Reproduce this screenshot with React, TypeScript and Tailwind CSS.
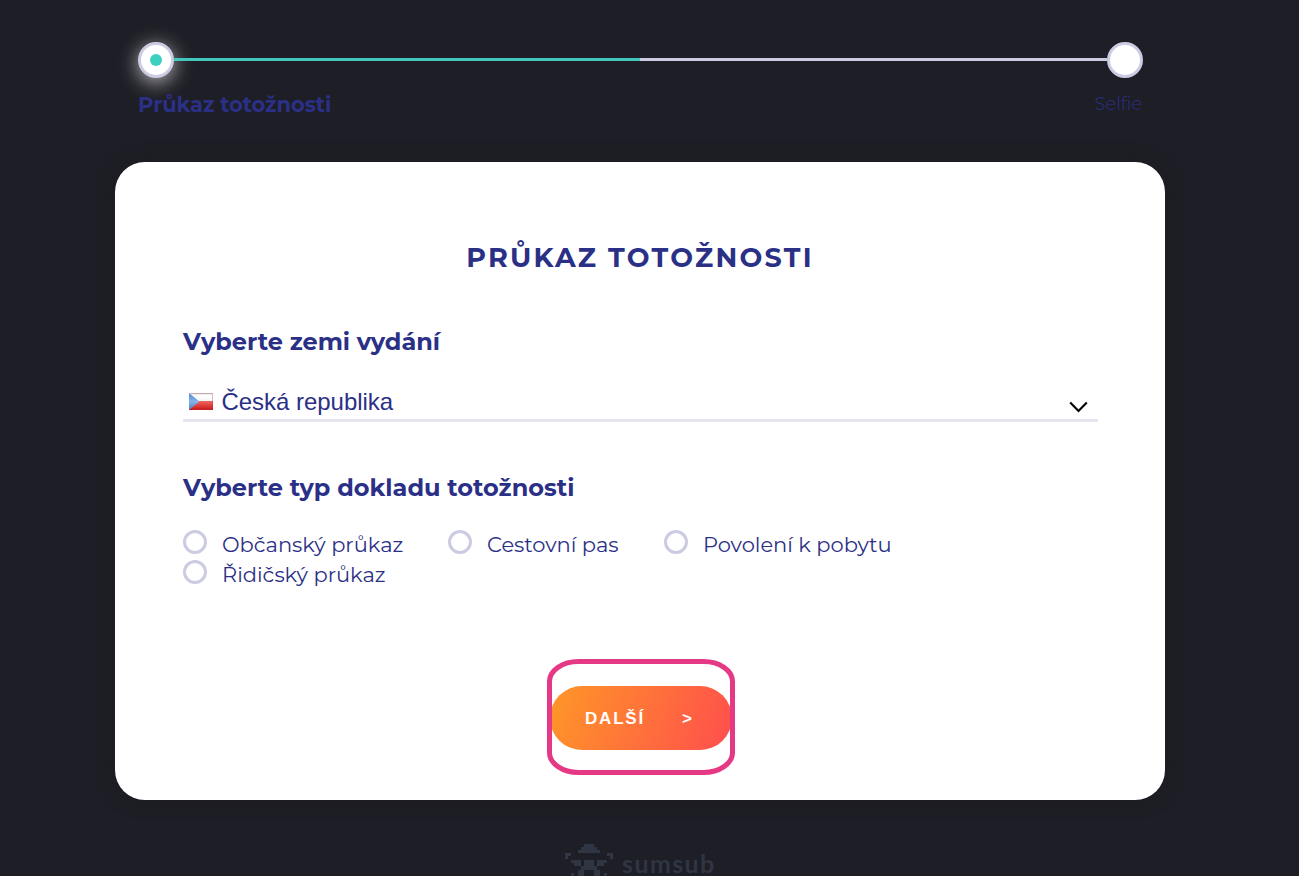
const documentTypes = [
    { name: 'Občanský průkaz', width: 'w-[265px]' },
    { name: 'Cestovní pas', width: 'w-[216px]' },
    { name: 'Povolení k pobytu', width: 'w-[240px]' },
    { name: 'Řidičský průkaz', width: 'w-[265px]' },
];

function Progress() {
    return (
        <div className="mr-[137px] ml-[138px] h-[162px] pt-[42px]">
            <div className="flex h-9 items-center">
                <div className="flex h-9 w-9 items-center justify-center rounded-full border-[3px] border-[#cbcbe3] bg-white shadow-[0_4px_20px_rgba(255,255,255,0.7)]">
                    <div className="h-3 w-3 rounded-full bg-[#3ccfc2]" />
                </div>
                <div className="mb-px h-[3px] w-[466px] bg-[#43c6bb]" />
                <div className="mb-px h-[3px] flex-1 bg-[#cbcbe3]" />
                <div className="h-9 w-9 rounded-full border-[3px] border-[#cbcbe3] bg-white" />
            </div>
            <div className="mt-[13px] mr-px flex justify-between text-[#2b3087]">
                <span className="mt-[2px] text-[21px] leading-6 font-bold tracking-[-0.03px] whitespace-nowrap">Průkaz totožnosti</span>
                <span className="mt-px text-[18px] leading-6 font-light">Selfie</span>
            </div>
        </div>
    );
}

function CzechFlag() {
    return (
        <svg width="24" height="17" viewBox="0 0 24 17" className="shrink-0">
            <defs>
                <linearGradient id="flagWhite" x1="0" y1="0" x2="0" y2="1">
                    <stop offset="0" stopColor="#d9d9df" />
                    <stop offset="0.3" stopColor="#fff" />
                    <stop offset="1" stopColor="#f4f4f4" />
                </linearGradient>
                <linearGradient id="flagRed" x1="0" y1="0" x2="0" y2="1">
                    <stop offset="0" stopColor="#ef6862" />
                    <stop offset="1" stopColor="#cd1718" />
                </linearGradient>
                <linearGradient id="flagBlue" x1="0" y1="0" x2="0" y2="1">
                    <stop offset="0" stopColor="#5288d4" />
                    <stop offset="0.5" stopColor="#85b3e6" />
                    <stop offset="1" stopColor="#4b81c8" />
                </linearGradient>
            </defs>
            <path d="M0 0h24v9H0z" fill="url(#flagWhite)" />
            <path d="M0 8h24v9H0z" fill="url(#flagRed)" />
            <path d="M0 0l10.500 8.500L0 17z" fill="url(#flagBlue)" />
            <path d="M2 .5h21.500v16H2" fill="none" stroke="#a03c45" strokeOpacity="0.35" />
        </svg>
    );
}

function SumsubLogo() {
    return (
        <div className="flex h-[33px] text-[#2f3542]">
            <svg width="48" height="33" viewBox="0 0 48 33" fill="currentColor" shapeRendering="crispEdges">
                <path d="M19 1h10v3h3v3h3v3H13V7h3V4h3z" />
                <path d="M0 10h6v3H3v3H0zM48 10h-6v3h3v3h3z" />
                <path d="M6 17h10v6H9v-3H6zM42 17H32v6h7v-3h3z" />
                <path d="M19 17h10v6h3v4h3v6h-6v-6H19v6h-6v-6h3v-4h3z" />
                <path d="M6 30h3v3H6zM39 30h3v3h-3z" />
            </svg>
            <span className="mt-[10px] ml-[9px] w-[93px] font-['Lato',sans-serif] text-[25px] leading-5 font-bold tracking-[1.4px]">sumsub</span>
        </div>
    );
}

export default function App() {
    return (
        <div className="h-[876px] w-full overflow-hidden bg-[#1e1e26] font-['Montserrat',Inter,sans-serif]">
            <div className="w-[1280px]">
                <Progress />
                <main className="mx-auto h-[638px] w-[1050px] rounded-[30px] bg-white px-[68px] pt-[76px] text-[#2b3087] shadow-[0_0_20px_rgba(24,24,20,0.3)]">
                    <h1 className="text-center text-[27px] leading-10 font-bold tracking-[2.25px] whitespace-nowrap">PRŮKAZ TOTOŽNOSTI</h1>

                    <h2 className="mt-[48px] text-[24px] leading-8 font-bold whitespace-nowrap">Vyberte zemi vydání</h2>
                    <div className="mt-[26px] flex h-[38px] w-[915px] items-center border-b-[3px] border-[#e5e5ef] pr-[9px] pl-[6px]">
                        <CzechFlag />
                        <span className="ml-[8.5px] font-['Liberation_Sans',sans-serif] text-[24px] leading-8 tracking-[-0.03px]">Česká republika</span>
                        <svg width="20" height="12" viewBox="0 0 20 12" fill="none" className="mt-[10px] ml-auto">
                            <path d="M1.200 1.500l8.300 8.500 8.300-8.500" stroke="#050505" strokeWidth="2.200" />
                        </svg>
                    </div>

                    <h2 className="mt-[50px] text-[24px] leading-8 font-bold whitespace-nowrap">Vyberte typ dokladu totožnosti</h2>
                    <div className="mt-[26px] flex flex-wrap">
                        {documentTypes.map((type) => (
                            <label key={type.name} className={`flex h-[30px] items-start ${type.width}`}>
                                <span className="h-6 w-6 shrink-0 rounded-full border-[3px] border-[#cbcbe3]" />
                                <span className="ml-[15px] text-[21px] leading-[30px] tracking-[-0.03px] whitespace-nowrap">{type.name}</span>
                            </label>
                        ))}
                    </div>

                    <div className="relative mt-[96px] ml-[367px] flex h-16 w-[182px] items-center rounded-full bg-linear-[110deg] from-[#ff9727] to-[#ff4e4d] font-['Liberation_Sans',sans-serif] text-[17px] font-bold text-white">
                        <span className="mt-px ml-[35px] w-[97px] tracking-[1.8px]">DALŠÍ</span>
                        <span className="mt-px">&gt;</span>
                        <svg width="190" height="118" viewBox="0 0 190 118" fill="none" className="absolute -top-[28px] -left-[3px]">
                            <rect x="2.500" y="3.500" width="183" height="111" rx="29" ry="20" stroke="#e63985" strokeWidth="5" />
                        </svg>
                    </div>
                </main>
                <footer className="mt-[43px] flex justify-center">
                    <SumsubLogo />
                </footer>
            </div>
        </div>
    );
}
